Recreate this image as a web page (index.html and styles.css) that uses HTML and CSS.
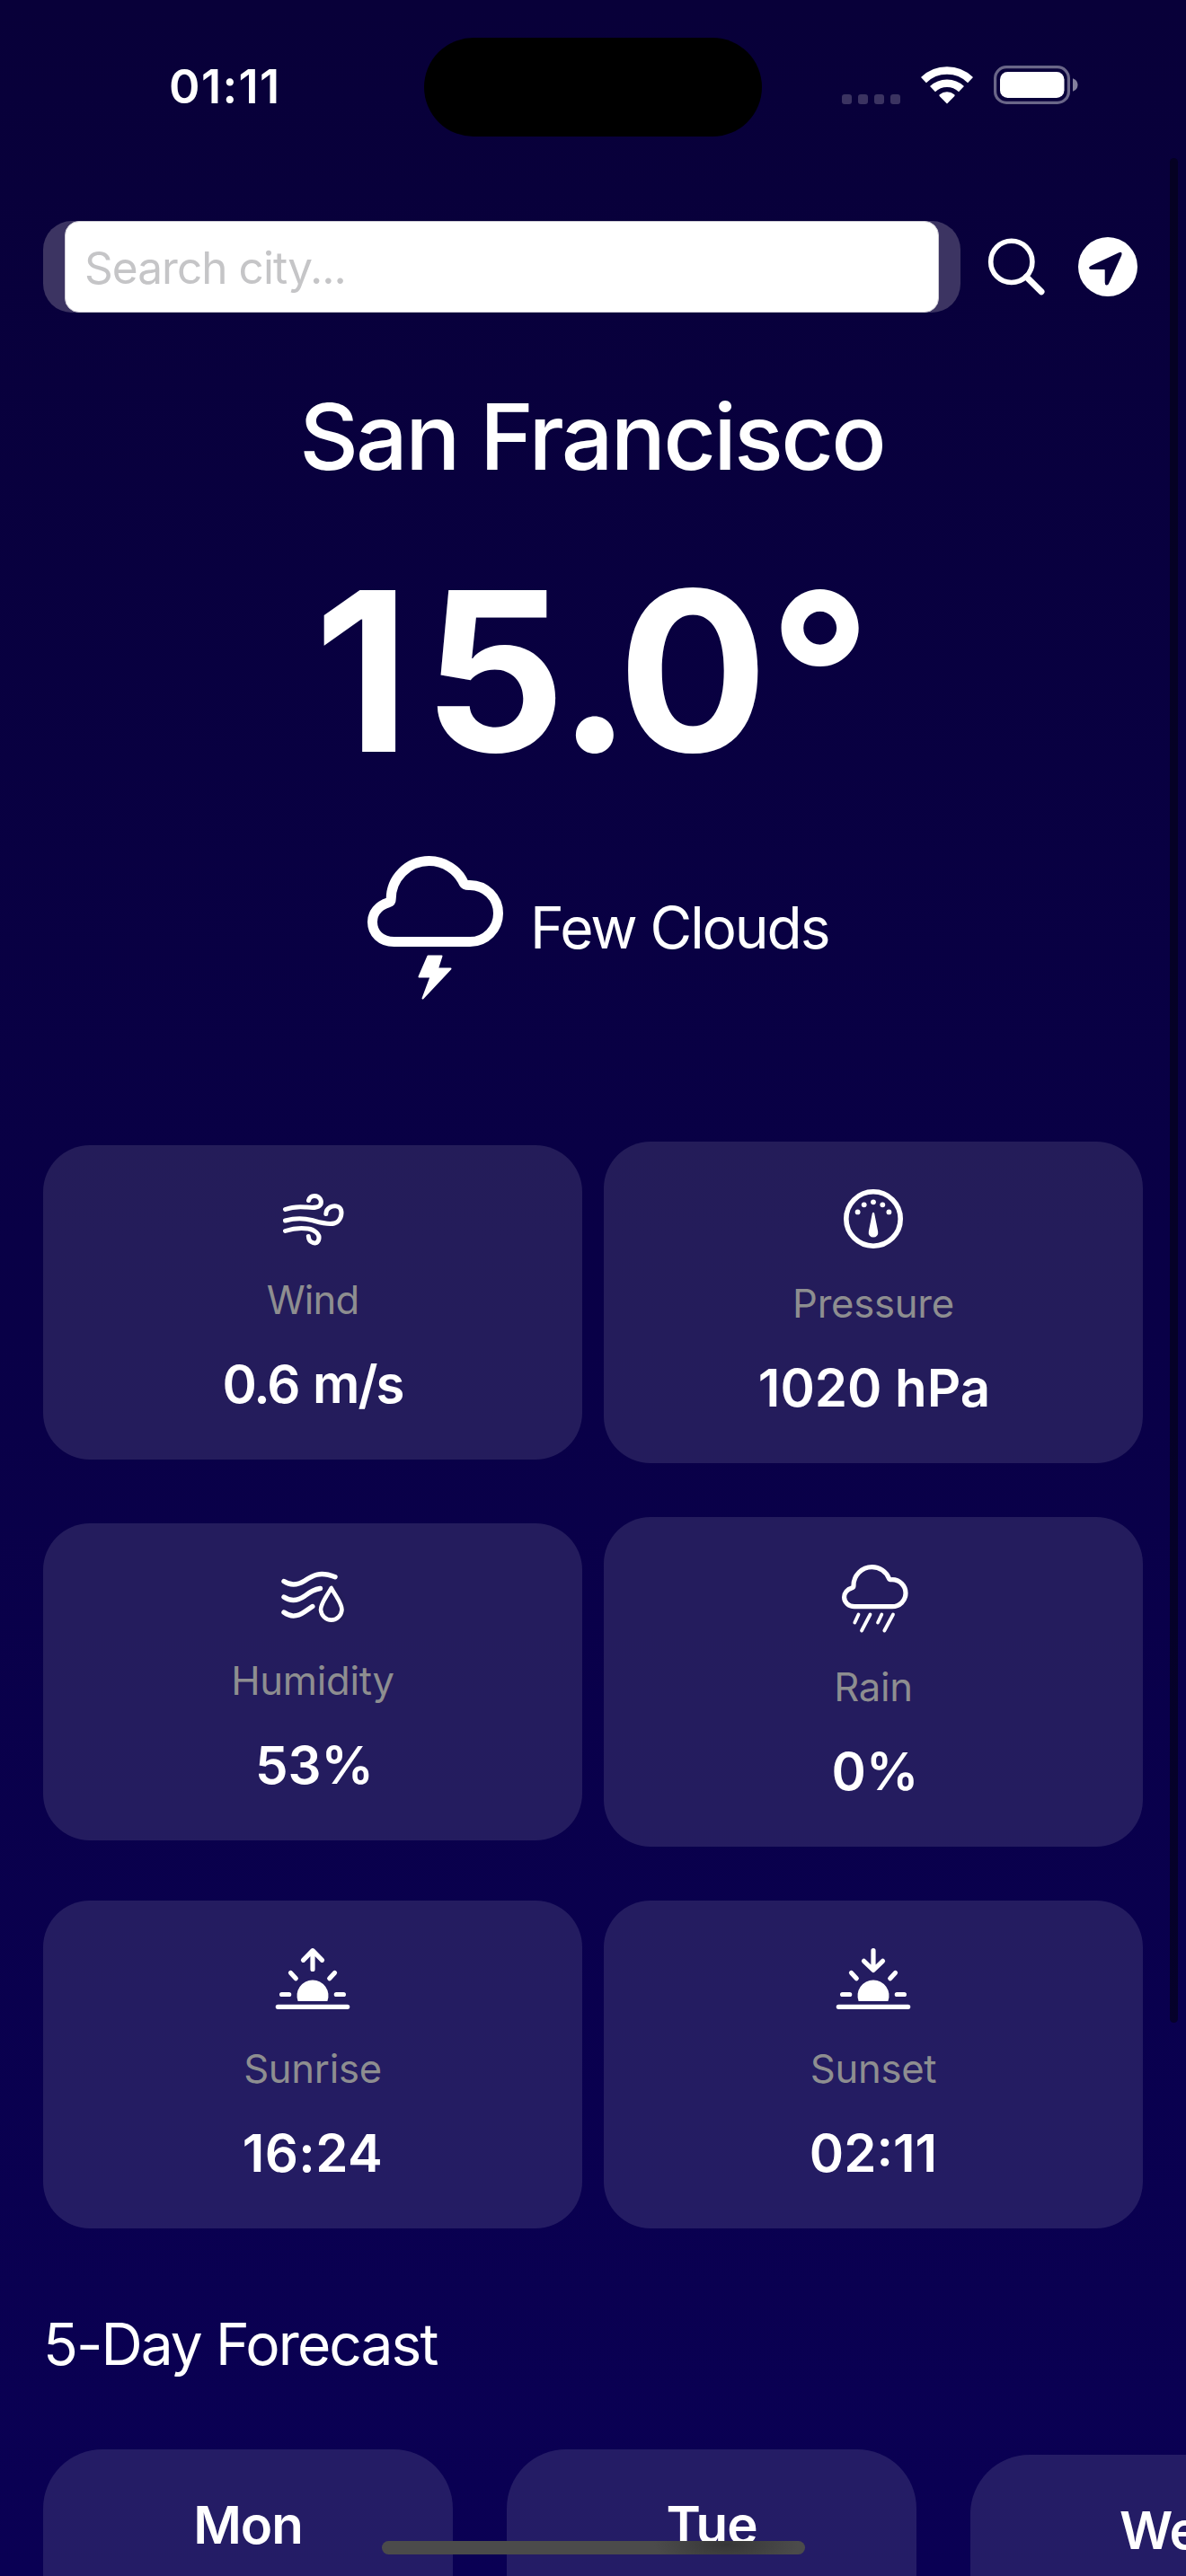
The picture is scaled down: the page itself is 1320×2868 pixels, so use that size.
FILE: index.html
```html
<!DOCTYPE html>
<html lang="en">
<head>
<meta charset="utf-8">
<title>Weather</title>
<link rel="stylesheet" href="styles.css">
</head>
<body>
<div class="screen">
  <header class="status">
    <div class="status-time">01:11</div>
    <div class="island"></div>
    <div class="status-icons">
      <svg class="i-dots" width="65" height="11" viewBox="0 0 65 11"><rect width="11" height="11" rx="3"/><rect x="18" width="11" height="11" rx="3"/><rect x="36" width="11" height="11" rx="3"/><rect x="54" width="11" height="11" rx="3"/></svg>
      <svg class="i-wifi" width="58" height="43" viewBox="0 0 58 43"><g fill="none" stroke="#fff" stroke-width="8.6"><path d="M2.9 16.1A37.5 37.5 0 0 1 55.1 16.1"/><path d="M13 26.2A23.2 23.2 0 0 1 45 26.2"/></g><path d="M29 42.6 20.6 33.9Q19.9 33 20.8 32.200A12.500 12.500 0 0 1 37.200 32.200Q38.100 33 37.400 33.900Z" fill="#fff"/></svg>
      <svg width="94" height="43" viewBox="0 0 94 43"><rect x="1.600" y="1.600" width="81.800" height="39.800" rx="12.500" fill="none" stroke="#fff" stroke-opacity=".4" stroke-width="3.200"/><rect x="7" y="7" width="71.500" height="29" rx="8.500" fill="#fff"/><path d="M88 14.200C91.500 15.600 93.500 18 93.500 21.500S91.500 27.400 88 28.800Z" fill="#fff" fill-opacity=".5"/></svg>
    </div>
  </header>

  <main class="content">
    <div class="search">
      <div class="search-shell"><div class="search-field">Search city...</div></div>
      <svg class="i-search" width="64" height="64" viewBox="0 0 64 64"><circle cx="26.800" cy="26.400" r="23.100" fill="none" stroke="#fff" stroke-width="5.600"/><path d="M43.300 43.300 60 59.800" stroke="#fff" stroke-width="7" stroke-linecap="round"/></svg>
      <svg class="i-locate" width="66" height="66" viewBox="0 0 66 66"><circle cx="33" cy="33" r="33" fill="#fff"/><path class="cut" d="M45.300 17.200Q49.400 15.800 48.300 20.300L34.300 51.200Q33.300 53.600 31.500 53.400 29.700 53.200 29.700 50.500V36.700Q29.700 36.100 29.100 36.100H15Q12.400 36.100 12.100 34.600 11.800 33 14 31.900Z"/></svg>
    </div>

    <h1 class="city">San Francisco</h1>
    <div class="temp"><span class="kern-one">1</span><span class="kern-five">5</span><span class="kern-dot">.</span>0°</div>
    <div class="condition">
      <svg width="152" height="160" viewBox="0 0 152 160"><path d="M29.500 95.500H114A31.500 31.500 0 0 0 114 32.500Q108.500 32.800 107.300 30.500A42.500 42.500 0 0 0 68.500 5.500A42.500 42.500 0 0 0 26.200 48Q26.200 51 23.500 51.800C12 55.500 5.500 63.500 5.500 73.500C5.500 86 15 95.500 29.500 95.500Z" fill="none" stroke="#fff" stroke-width="11" stroke-linejoin="round"/><path d="M67.500 111.500H82.500L78 125.500H92.500L61.500 158.500 70.500 134.500H57.500Z" fill="#fff" stroke="#fff" stroke-width="2" stroke-linejoin="round"/></svg>
      <span>Few Clouds</span>
    </div>

    <section class="metrics">
      <article class="metric">
        <svg width="76" height="68" viewBox="0 0 76 68"><g fill="none" stroke="#fff" stroke-width="5" stroke-linecap="round" stroke-linejoin="round"><path d="M7.500 23.500C17 20 24 20.500 30 21S44 22.500 46.500 18.500 46 8.400 40 8.400Q35 8.400 33.500 13.500"/><path d="M7.500 36C20 32.500 28 33 37 35.500S55 41 62 39 71 29 69.500 24 61 19 57.500 21 52.800 25.500 52.800 28.500"/><path d="M7.500 47.500C18 44 26 44 33 45S46 51 45 56 41 61.300 38.500 60.600 33.500 57.500 33.300 53.500"/></g></svg>
        <div class="label tight">Wind</div><div class="value value-speed">0.6 m/s</div>
      </article>
      <article class="metric">
        <svg width="76" height="76" viewBox="0 0 76 76"><circle cx="38" cy="38" r="30.200" fill="none" stroke="#fff" stroke-width="5.600"/><g fill="#fff"><circle cx="20.600" cy="30.400" r="2.900"/><circle cx="27.700" cy="22.300" r="2.900"/><circle cx="38" cy="19.300" r="2.900"/><circle cx="48.300" cy="22.300" r="2.900"/><circle cx="55.400" cy="30.400" r="2.900"/><path d="M36.800 32Q38 29.500 39.200 32L43.200 52.300A5.300 5.300 0 1 1 32.800 52.300Z"/></g></svg>
        <div class="label">Pressure</div><div class="value value-pressure">1020 hPa</div>
      </article>
      <article class="metric">
        <svg width="76" height="71" viewBox="0 0 76 71"><g fill="none" stroke="#fff" stroke-width="5.400" stroke-linecap="round" stroke-linejoin="round"><path d="M6 16.500C14 22 21 21 29 16 38 10 46 5 63 11.800"/><path d="M6 34C14 39.500 21 38.500 29 33 34 29 40 25.500 46.500 24.500" /><path d="M6 51C14 57 21 56 29 50.500L37.800 44.500"/><path class="halo" d="M58.700 20.500C54 31 47 39 47 47.500A11.800 13.500 0 0 0 70.500 47.500C70.500 39 63.500 31 58.700 20.500Z"/><path stroke-width="4.600" d="M58.700 24C54 33 47 40.500 47 48.300A11.800 12.500 0 0 0 70.500 48.300C70.500 40.500 63.500 33 58.700 24Z"/></g></svg>
        <div class="label">Humidity</div><div class="value value-percent">53%</div>
      </article>
      <article class="metric">
        <svg class="bleed" width="76" height="85" viewBox="0 0 76 85"><path d="M17 51.700H59A15 15 0 0 0 59 21.700Q56.200 21.900 55.500 20.500A20.600 20.600 0 0 0 36.600 7.600A20.600 20.600 0 0 0 16 28.500Q16 30.500 14 31C9 32.500 5.600 36.500 5.600 41.300C5.600 47 10.500 51.700 17 51.700Z" fill="none" stroke="#fff" stroke-width="5.200" stroke-linejoin="round"/><path d="M21.500 60.500 17.300 69.500M34.500 60.500 25 78.500M47.300 60.500 43 69.500M60 60.500 50.300 78.500" fill="none" stroke="#fff" stroke-width="3.800" stroke-linecap="round"/></svg>
        <div class="label">Rain</div><div class="value value-percent">0%</div>
      </article>
      <article class="metric">
        <svg width="84" height="83" viewBox="0 0 84 83"><g fill="none" stroke="#fff" stroke-width="5.200" stroke-linecap="round" stroke-linejoin="round"><path d="M42 8.500V28.500M31.500 18.300 42 7.700 52.500 18.300"/><path d="M17.500 32.500 23.300 38.700M66.500 32.500 60.700 38.700M7.600 56.500H15.700M68.300 56.500H76.400M3.300 70.300H80.700"/></g><path d="M25.600 64A17.500 17.500 0 1 1 58.400 64Z" fill="#fff"/></svg>
        <div class="label">Sunrise</div><div class="value value-time">16:24</div>
      </article>
      <article class="metric">
        <svg width="84" height="83" viewBox="0 0 84 83"><g fill="none" stroke="#fff" stroke-width="5.200" stroke-linecap="round" stroke-linejoin="round"><path d="M42 7.700V28M31.500 19.300 42 29.500 52.500 19.300"/><path d="M17.500 32.500 23.300 38.700M66.500 32.500 60.700 38.700M7.600 56.500H15.700M68.300 56.500H76.400M3.300 70.300H80.700"/></g><path d="M25.600 64A17.500 17.500 0 1 1 58.400 64Z" fill="#fff"/></svg>
        <div class="label">Sunset</div><div class="value">02:11</div>
      </article>
    </section>

    <h2 class="forecast-title">5-Day Forecast</h2>
    <section class="forecast">
      <article class="day">Mon</article>
      <article class="day">Tue</article>
      <article class="day day-short">Wed</article>
    </section>
  </main>

  <div class="scrollbar"></div>
  <div class="home-indicator"></div>
</div>
</body>
</html>
```
FILE: styles.css
```css
* { box-sizing: border-box; }

body {
  margin: 0;
  font-family: Inter, "Liberation Sans", sans-serif;
  color: #fff;
}

svg { display: block; flex: none; }

.screen {
  position: relative;
  width: 1320px;
  height: 2868px;
  overflow: hidden;
  background: linear-gradient(#080039, #0a0054);
}

/* Status bar */
.status {
  display: grid;
  grid-template-columns: 472px 376px 472px;
  align-items: center;
  height: 186px;
  padding: 42px 0 34px;
}
.status-time {
  padding-left: 188px;
  margin-top: -2px;
  font-size: 52.3px;
  font-weight: 600;
  line-height: 64px;
  letter-spacing: 0.027em;
}
.island {
  height: 110px;
  border-radius: 55px;
  background: #000;
}
.status-icons {
  display: flex;
  align-items: flex-end;
  gap: 23px;
  padding-left: 89px;
  margin-top: -5px;
}
.i-dots { fill: #3b3361; }

.content { padding: 60px 48px 0; }

/* Search */
.search {
  display: flex;
  align-items: center;
  height: 102px;
}
.search-shell {
  width: 1021px;
  height: 102px;
  padding: 0 24px;
  border-radius: 32px;
  background: #3c3462;
}
.search-field {
  height: 102px;
  padding-left: 21px;
  border: 1px solid #cfcdd6;
  border-radius: 16px;
  background: #fff;
  color: #c5c5c7;
  font-size: 49.5px;
  line-height: 102px;
  letter-spacing: -0.019em;
}
.i-search { margin-left: 30px; }
.i-locate { margin-left: 37px; }
.cut { fill: #08003b; }

/* Current conditions */
.city {
  margin: 78px 0 0;
  padding-right: 3px;
  font-size: 101.8px;
  font-weight: 500;
  line-height: 120px;
  letter-spacing: -0.0272em;
  text-align: center;
}
.temp {
  margin-top: 57px;
  font-size: 247.6px;
  font-weight: 700;
  line-height: 288px;
  letter-spacing: 1px;
  text-align: center;
}
.kern-one { letter-spacing: 15px; }
.kern-five { letter-spacing: -9px; }
.kern-dot { letter-spacing: -15.5px; }
.condition {
  display: flex;
  align-items: center;
  gap: 29px;
  margin-top: 62px;
  padding-left: 361px;
  font-size: 64px;
  line-height: 80px;
  letter-spacing: -0.0325em;
}

/* Metric tiles */
.metrics {
  display: grid;
  grid-template-columns: 600px 600px;
  align-items: center;
  gap: 60px 24px;
  margin-top: 158px;
}
.metric {
  display: flex;
  flex-direction: column;
  align-items: center;
  gap: 30px;
  padding: 48px 0;
  border-radius: 52px;
  background: rgba(255, 255, 255, 0.11);
}
.label {
  color: #8e8e90;
  font-size: 43.6px;
  line-height: 54px;
  letter-spacing: -0.006em;
}
.value {
  font-size: 58.2px;
  font-weight: 600;
  line-height: 72px;
}
.tight { letter-spacing: -0.02em; }
.value-speed { letter-spacing: -0.034em; word-spacing: 3px; }
.value-pressure { padding-left: 2px; }
.value-percent { padding-left: 4px; }
.value-time { letter-spacing: 0.007em; }
.bleed { overflow: visible; }
.halo { stroke: #231c59; stroke-width: 11px; }

/* Forecast strip */
.forecast-title {
  margin: 89px 0 0;
  font-size: 64px;
  font-weight: 400;
  line-height: 80px;
  letter-spacing: -0.03em;
}
.forecast {
  display: flex;
  align-items: center;
  gap: 60px;
  margin-top: 77px;
}
.day {
  flex: none;
  width: 456px;
  height: 462px;
  padding-top: 48px;
  border-radius: 66px;
  background: rgba(255, 255, 255, 0.11);
  font-size: 58.2px;
  font-weight: 600;
  line-height: 72px;
  letter-spacing: -0.018em;
  text-align: center;
}
.day-short { height: 450px; }

/* System overlays */
.scrollbar {
  position: absolute;
  top: 176px;
  left: 1302px;
  width: 9px;
  height: 2076px;
  border-radius: 5px;
  background: rgba(3, 1, 20, 0.6);
}
.home-indicator {
  position: absolute;
  left: 425px;
  bottom: 24px;
  width: 471px;
  height: 15px;
  border-radius: 8px;
  background: radial-gradient(80px 26px at 383px 4px, #363636, #4b4b4b);
}
```
